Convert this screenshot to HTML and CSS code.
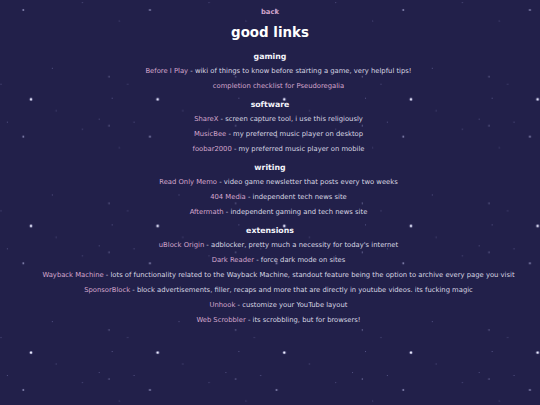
FILE: index.html
```html
<!DOCTYPE html>
<html lang="en">
<head>
<meta charset="utf-8">
<title>good links</title>
<link rel="stylesheet" href="styles.css">
</head>
<body>
<main class="page">
  <a class="back" href="#">back</a>
  <h1 class="title">good links</h1>

  <section class="group">
    <h3 class="group-title">gaming</h3>
    <ul class="rows">
      <li class="row"><a href="#">Before I Play</a> - wiki of things to know before starting a game, very helpful tips!</li>
      <li class="row"><a href="#">completion checklist for Pseudoregalia</a></li>
    </ul>
  </section>

  <section class="group">
    <h3 class="group-title">software</h3>
    <ul class="rows">
      <li class="row"><a href="#">ShareX</a> - screen capture tool, i use this religiously</li>
      <li class="row"><a href="#">MusicBee</a> - my preferred music player on desktop</li>
      <li class="row"><a href="#">foobar2000</a> - my preferred music player on mobile</li>
    </ul>
  </section>

  <section class="group">
    <h3 class="group-title">writing</h3>
    <ul class="rows">
      <li class="row"><a href="#">Read Only Memo</a> - video game newsletter that posts every two weeks</li>
      <li class="row"><a href="#">404 Media</a> - independent tech news site</li>
      <li class="row"><a href="#">Aftermath</a> - independent gaming and tech news site</li>
    </ul>
  </section>

  <section class="group">
    <h3 class="group-title">extensions</h3>
    <ul class="rows">
      <li class="row"><a href="#">uBlock Origin</a> - adblocker, pretty much a necessity for today's internet</li>
      <li class="row"><a href="#">Dark Reader</a> - force dark mode on sites</li>
      <li class="row"><a href="#">Wayback Machine</a> - lots of functionality related to the Wayback Machine, standout feature being the option to archive every page you visit</li>
      <li class="row"><a href="#">SponsorBlock</a> - block advertisements, filler, recaps and more that are directly in youtube videos. its fucking magic</li>
      <li class="row"><a href="#">Unhook</a> - customize your YouTube layout</li>
      <li class="row"><a href="#">Web Scrobbler</a> - its scrobbling, but for browsers!</li>
    </ul>
  </section>
</main>
</body>
</html>
```

FILE: styles.css
```css
html, body {
  margin: 0;
  padding: 0;
}

body {
  min-height: 405px;
  background-color: #22204a;
  background-image:
    radial-gradient(circle at 31px 99.3px, #ffffff 0, #e8e8ff 0.8px, rgba(200,200,255,0.35) 1.4px, transparent 2px),
    radial-gradient(circle at 23.3px 10px, rgba(220,220,255,0.8) 0, rgba(200,200,255,0.3) 0.9px, transparent 1.4px),
    radial-gradient(circle at 109px 76.7px, rgba(180,180,230,0.6) 0, transparent 1.1px),
    radial-gradient(circle at 109px 125.7px, rgba(180,180,230,0.6) 0, transparent 1.1px),
    radial-gradient(circle at 1px 84px, rgba(150,150,210,0.5) 0, transparent 0.9px),
    radial-gradient(circle at 112.3px 98.3px, rgba(150,150,210,0.5) 0, transparent 0.9px),
    radial-gradient(circle at 56px 110.7px, rgba(150,150,210,0.5) 0, transparent 0.9px),
    radial-gradient(circle at 7.3px 122.3px, rgba(150,150,210,0.5) 0, transparent 0.9px),
    radial-gradient(circle at 99.3px 119.3px, rgba(150,150,210,0.45) 0, transparent 0.9px),
    radial-gradient(circle at 82.5px 2.7px, rgba(150,150,210,0.45) 0, transparent 0.9px),
    radial-gradient(circle at 119.5px 21px, rgba(150,150,210,0.45) 0, transparent 0.9px),
    radial-gradient(circle at 52.3px 68.3px, rgba(150,150,210,0.45) 0, transparent 0.9px);
  background-size: 126.67px 126.67px;
  background-repeat: repeat;
  color: #d8d7e2;
  font-family: "DejaVu Sans", Verdana, sans-serif;
  font-size: 6.8px;
}

a {
  color: #d4a6cc;
  text-decoration: none;
}

.page {
  display: flex;
  flex-direction: column;
  align-items: center;
  padding-top: 5px;
  text-align: center;
}

.back {
  display: block;
  line-height: 14px;
  font-weight: bold;
}

.title {
  margin: 0;
  font-size: 13.4px;
  line-height: 27px;
  color: #ffffff;
}

.group {
  display: flex;
  flex-direction: column;
  align-items: center;
}

.group-title {
  margin: 0;
  padding-top: 3px;
  font-size: 7.8px;
  line-height: 15px;
  color: #f4f4fa;
}

.rows {
  list-style: none;
  margin: 0;
  padding: 0 0 0 17px;
  display: flex;
  flex-direction: column;
  align-items: center;
}

.row {
  line-height: 15px;
  white-space: nowrap;
}
```
